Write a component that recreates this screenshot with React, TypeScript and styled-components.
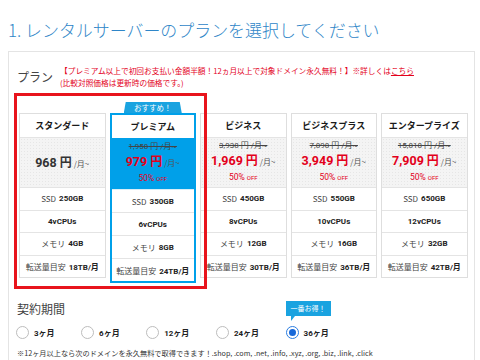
import React from 'react';
import styled, { createGlobalStyle } from 'styled-components';

const Global = createGlobalStyle`
  html, body { margin: 0; padding: 0; background: #fff; }
  body { font-family: "Noto Sans CJK JP", "Noto Sans", sans-serif; color: #333; }
  * { box-sizing: border-box; }
`;

const JP = `"Noto Sans CJK JP", "Noto Sans", sans-serif`;
const NUM = `Roboto, "Noto Sans CJK JP", sans-serif`;
const RED = '#e3001b';
const BLUE = '#00a0e9';

const Page = styled.div`
  width: 480px;
  height: 360px;
  overflow: hidden;
  padding: 20px 5px 0 8px;
`;

const Title = styled.h1`
  margin: 0;
  font-family: ${JP};
  font-size: 16.95px;
  line-height: 20px;
  font-weight: 300;
  color: #2f86c8;
  white-space: nowrap;
`;

const Panel = styled.section`
  margin-top: 11px;
  border: 1px solid #e4e4e4;
  padding: 13px 0 0 8px;
  height: 320px;
`;

const PlanRow = styled.div`
  display: flex;
  align-items: center;
`;

const SectionLabel = styled.div`
  font-family: ${JP};
  font-size: 12px;
  line-height: 16px;
  color: #444;
  flex: 0 0 auto;
`;

const PlanLabel = styled(SectionLabel)`
  width: 43px;
`;

const RedNote = styled.div`
  font-family: ${JP};
  font-size: 7.7px;
  line-height: 12px;
  color: ${RED};
  white-space: nowrap;
`;

const NoteLink = styled.a`
  color: ${RED};
  text-decoration: underline;
`;

const CardsArea = styled.div`
  position: relative;
  margin: 24px 0 0 2px;
  width: 448.5px;
  display: grid;
  grid-template-columns: repeat(5, 1fr);
  column-gap: 4px;
  align-items: start;
`;

const RedFrame = styled.div`
  position: absolute;
  left: -5px;
  top: -20px;
  width: 193px;
  height: 196px;
  border: 3px solid #e8141c;
  pointer-events: none;
  z-index: 3;
`;

const Card = styled.div<{ $featured?: boolean }>`
  position: relative;
  background: #fff;
  border: ${(p) => (p.$featured ? `2px solid ${BLUE}` : '1px solid #dedede')};
`;

const Badge = styled.div`
  position: absolute;
  left: 50%;
  top: -13px;
  transform: translateX(-50%);
  width: 58px;
  height: 11px;
  background: #1aa3e0;
  clip-path: polygon(2px 0, calc(100% - 2px) 0, 100% 100%, 0 100%);
  color: #fff;
  font-family: ${JP};
  font-size: 7.5px;
  line-height: 11px;
  text-align: center;
`;

const CardHead = styled.div<{ $featured?: boolean }>`
  height: ${(p) => (p.$featured ? '23px' : '24px')};
  display: flex;
  align-items: center;
  justify-content: center;
  font-family: ${JP};
  font-size: 9px;
  font-weight: 700;
  color: #1a1a1a;
  background: #fff;
  border-bottom: ${(p) => (p.$featured ? 'none' : '1px solid #e4e4e4')};
`;

const PriceArea = styled.div<{ $featured?: boolean }>`
  height: ${(p) => (p.$featured ? '52px' : '50px')};
  display: flex;
  flex-direction: column;
  align-items: center;
  justify-content: center;
  border-bottom: 1px solid ${(p) => (p.$featured ? '#d9eef8' : '#e4e4e4')};
  background-color: ${(p) => (p.$featured ? BLUE : '#f4f4f4')};
  background-image: ${(p) =>
    p.$featured ? 'none' : 'radial-gradient(rgba(0,0,0,0.06) 0.6px, transparent 0.9px)'};
  background-size: 3px 3px;
`;

const OldPrice = styled.div`
  font-family: ${NUM};
  font-size: 8px;
  line-height: 12px;
  color: #444;
  text-decoration: line-through;
`;

const MainPrice = styled.div`
  display: flex;
  align-items: baseline;
  line-height: 15px;
  white-space: nowrap;
`;

const PriceNum = styled.span<{ $red?: boolean }>`
  font-family: ${NUM};
  font-size: 12.5px;
  font-weight: 700;
  color: ${(p) => (p.$red ? RED : '#333')};
`;

const Yen = styled.span<{ $red?: boolean }>`
  font-family: ${JP};
  font-size: 12px;
  font-weight: 700;
  margin-left: 3px;
  color: ${(p) => (p.$red ? RED : '#333')};
`;

const Per = styled.span`
  font-family: ${JP};
  font-size: 8px;
  color: #555;
  margin-left: 2px;
`;

const Off = styled.div`
  font-family: ${NUM};
  font-size: 8.5px;
  line-height: 14px;
  color: ${RED};
  margin-top: 1px;
`;

const OffSmall = styled.span`
  font-size: 6px;
  margin-left: 2px;
`;

const SpecRow = styled.div<{ $featured?: boolean }>`
  height: ${(p) => (p.$featured ? '23px' : '22.5px')};
  display: flex;
  align-items: center;
  justify-content: center;
  gap: 3px;
  font-family: ${JP};
  font-size: 8px;
  color: #444;
  white-space: nowrap;
  border-bottom: 1px solid #e4e4e4;
  &:last-child {
    border-bottom: none;
    height: ${(p) => (p.$featured ? '22px' : '21.5px')};
  }
`;

const SpecValue = styled.b`
  font-family: ${NUM};
  font-weight: 700;
  color: #222;
`;

const ContractTitle = styled(SectionLabel)`
  margin-top: 18px;
`;

const RadioRow = styled.div`
  display: flex;
  align-items: center;
  margin: 8px 0 0 -1px;
  gap: 26.5px;
`;

const Option = styled.label`
  position: relative;
  display: flex;
  align-items: center;
  gap: 5px;
  height: 14px;
`;

const Radio = styled.span<{ $checked?: boolean }>`
  width: 13px;
  height: 13px;
  border-radius: 50%;
  border: 1px solid ${(p) => (p.$checked ? '#2a7de1' : '#bdbdbd')};
  background: #fff;
  display: flex;
  align-items: center;
  justify-content: center;
  &::after {
    content: '';
    display: ${(p) => (p.$checked ? 'block' : 'none')};
    width: 7px;
    height: 7px;
    border-radius: 50%;
    background: #1668d9;
  }
`;

const OptionText = styled.span`
  font-family: ${NUM};
  font-size: 8px;
  font-weight: 700;
  color: #222;
`;

const Bubble = styled.div`
  position: absolute;
  left: 0;
  bottom: calc(100% + 9px);
  width: 45px;
  height: 15px;
  background: #1aa3e0;
  color: #fff;
  font-family: ${JP};
  font-size: 7px;
  line-height: 15px;
  text-align: center;
  &::after {
    content: '';
    position: absolute;
    left: 5px;
    top: 100%;
    border-left: 4px solid #1aa3e0;
    border-bottom: 5px solid transparent;
  }
`;

const BottomNote = styled.div`
  margin-top: 8px;
  font-family: ${JP};
  font-size: 7.2px;
  line-height: 12px;
  color: #333;
  white-space: nowrap;
`;

type Plan = {
  name: string;
  old?: string;
  price: string;
  ssd: string;
  cpu: string;
  mem: string;
  transfer: string;
  featured?: boolean;
};

const plans: Plan[] = [
  { name: 'スタンダード', price: '968', ssd: '250GB', cpu: '4vCPUs', mem: '4GB', transfer: '18TB/月' },
  { name: 'プレミアム', old: '1,958', price: '979', ssd: '350GB', cpu: '6vCPUs', mem: '8GB', transfer: '24TB/月', featured: true },
  { name: 'ビジネス', old: '3,938', price: '1,969', ssd: '450GB', cpu: '8vCPUs', mem: '12GB', transfer: '30TB/月' },
  { name: 'ビジネスプラス', old: '7,898', price: '3,949', ssd: '550GB', cpu: '10vCPUs', mem: '16GB', transfer: '36TB/月' },
  { name: 'エンタープライズ', old: '15,818', price: '7,909', ssd: '650GB', cpu: '12vCPUs', mem: '32GB', transfer: '42TB/月' },
];

const terms = ['3ヶ月', '6ヶ月', '12ヶ月', '24ヶ月', '36ヶ月'];

function PlanCard({ plan }: { plan: Plan }) {
  const f = plan.featured;
  const red = !!plan.old;
  return (
    <Card $featured={f}>
      {f && <Badge>おすすめ！</Badge>}
      <CardHead $featured={f}>{plan.name}</CardHead>
      <PriceArea $featured={f}>
        {plan.old && <OldPrice>{plan.old} 円 /月~</OldPrice>}
        <MainPrice>
          <PriceNum $red={red}>{plan.price}</PriceNum>
          <Yen $red={red}>円</Yen>
          <Per>/月~</Per>
        </MainPrice>
        {plan.old && (
          <Off>
            50%<OffSmall>OFF</OffSmall>
          </Off>
        )}
      </PriceArea>
      <SpecRow $featured={f}>
        <span>SSD</span>
        <SpecValue>{plan.ssd}</SpecValue>
      </SpecRow>
      <SpecRow $featured={f}>
        <SpecValue>{plan.cpu}</SpecValue>
      </SpecRow>
      <SpecRow $featured={f}>
        <span>メモリ</span>
        <SpecValue>{plan.mem}</SpecValue>
      </SpecRow>
      <SpecRow $featured={f}>
        <span>転送量目安</span>
        <SpecValue>{plan.transfer}</SpecValue>
      </SpecRow>
    </Card>
  );
}

export default function App() {
  return (
    <Page>
      <Global />
      <Title>1. レンタルサーバーのプランを選択してください</Title>
      <Panel>
        <PlanRow>
          <PlanLabel>プラン</PlanLabel>
          <RedNote>
            【プレミアム以上で初回お支払い金額半額！12ヵ月以上で対象ドメイン永久無料！】※詳しくは
            <NoteLink>こちら</NoteLink>
            <br />
            (比較対照価格は更新時の価格です。)
          </RedNote>
        </PlanRow>
        <CardsArea>
          <RedFrame />
          {plans.map((p) => (
            <PlanCard key={p.name} plan={p} />
          ))}
        </CardsArea>
        <ContractTitle>契約期間</ContractTitle>
        <RadioRow>
          {terms.map((t, i) => (
            <Option key={t}>
              {i === 4 && <Bubble>一番お得！</Bubble>}
              <Radio $checked={i === 4} />
              <OptionText>{t}</OptionText>
            </Option>
          ))}
        </RadioRow>
        <BottomNote>
          ※12ヶ月以上なら次のドメインを永久無料で取得できます！.shop, .com, .net, .info, .xyz, .org, .biz, .link, .click
        </BottomNote>
      </Panel>
    </Page>
  );
}
